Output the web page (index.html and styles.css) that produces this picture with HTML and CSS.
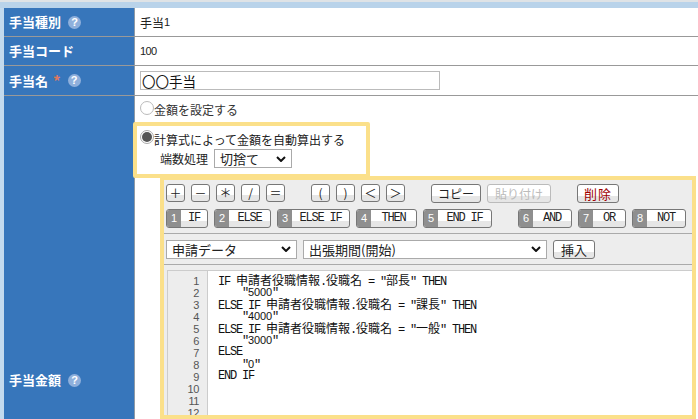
FILE: index.html
```html
<!DOCTYPE html>
<html lang="ja">
<head>
<meta charset="utf-8">
<title>手当</title>
<link rel="stylesheet" href="styles.css">
</head>
<body>
<div class="frame">
  <div class="row row-a">
    <div class="head"><span class="label">手当種別</span><span class="help">?</span></div>
    <div class="cell">手当<span class="num">1</span></div>
  </div>
  <div class="row row-a">
    <div class="head"><span class="label">手当コード</span></div>
    <div class="cell"><span class="num">100</span></div>
  </div>
  <div class="row row-b">
    <div class="head"><span class="label">手当名</span><span class="req">*</span><span class="help">?</span></div>
    <div class="cell"><input class="name-input" type="text" value="〇〇手当"></div>
  </div>
  <div class="row row-last">
    <div class="head head-bottom"><span class="label">手当金額</span><span class="help">?</span></div>
    <div class="cell-col">
      <div class="radio-line"><span class="radio"></span>金額を設定する</div>
      <div class="hl-box">
        <div class="radio-line2"><span class="radio radio-on"></span>計算式によって金額を自動算出する</div>
        <div class="round-line">端数処理<span class="select sel-round">切捨て<svg class="chev" viewBox="0 0 10 6"><path d="M1 1l4 4 4-4" /></svg></span></div>
      </div>
      <div class="editor-box">
        <div class="tools">
          <div class="btn-row">
            <span class="btn sym">＋</span><span class="btn sym">－</span><span class="btn sym">＊</span><span class="btn sym">/</span><span class="btn sym">＝</span>
            <span class="spacer"></span>
            <span class="btn sym">(</span><span class="btn sym">)</span><span class="btn sym">＜</span><span class="btn sym">＞</span>
            <span class="spacer"></span>
            <span class="btn wide">コピー</span><span class="btn wide off">貼り付け</span>
            <span class="spacer"></span>
            <span class="btn del">削除</span>
          </div>
          <div class="btn-row row2">
            <span class="kbtn k-if"><i>1</i><b>IF</b></span>
            <span class="kbtn k-else"><i>2</i><b>ELSE</b></span>
            <span class="kbtn k-elif"><i>3</i><b>ELSE IF</b></span>
            <span class="kbtn k-then"><i>4</i><b>THEN</b></span>
            <span class="kbtn k-end"><i>5</i><b>END IF</b></span>
            <span class="spacer"></span>
            <span class="kbtn k-and"><i>6</i><b>AND</b></span>
            <span class="kbtn k-or"><i>7</i><b>OR</b></span>
            <span class="kbtn k-not"><i>8</i><b>NOT</b></span>
          </div>
        </div>
        <div class="insert">
          <span class="select sel-data">申請データ<svg class="chev" viewBox="0 0 10 6"><path d="M1 1l4 4 4-4" /></svg></span>
          <span class="select sel-field">出張期間(開始)<svg class="chev" viewBox="0 0 10 6"><path d="M1 1l4 4 4-4" /></svg></span>
          <span class="btn ins">挿入</span>
        </div>
        <div class="code">
          <div class="gutter"><div>1</div><div>2</div><div>3</div><div>4</div><div>5</div><div>6</div><div>7</div><div>8</div><div>9</div><div>10</div><div>11</div><div>12</div></div>
          <div class="src">
            <div class="ln">IF <span class="ja">申請者役職情報</span>.<span class="ja">役職名</span> = "<span class="ja">部長</span>" THEN</div>
            <div class="ln">    "<span class="dg">5000</span>"</div>
            <div class="ln">ELSE IF <span class="ja">申請者役職情報</span>.<span class="ja">役職名</span> = "<span class="ja">課長</span>" THEN</div>
            <div class="ln">    "<span class="dg">4000</span>"</div>
            <div class="ln">ELSE IF <span class="ja">申請者役職情報</span>.<span class="ja">役職名</span> = "<span class="ja">一般</span>" THEN</div>
            <div class="ln">    "<span class="dg">3000</span>"</div>
            <div class="ln">ELSE</div>
            <div class="ln">    "<span class="dg">0</span>"</div>
            <div class="ln">END IF</div>
          </div>
        </div>
      </div>
    </div>
  </div>
</div>
</body>
</html>
```
FILE: styles.css
```css
* { box-sizing: border-box; }
html, body { margin: 0; height: 419px; overflow: hidden; background: #fff; }
body {
  font-family: "Noto Sans CJK JP", "Liberation Sans", sans-serif;
  font-size: 12px;
  color: #222;
}
.frame {
  height: 419px;
  width: 698px;
  background: #fff;
  border-top: 2px solid #dfe3e6;
  padding-top: 6px;
  position: relative;
  box-shadow: inset 4px 0 0 #c3daee;
}
.frame::before {
  content: "";
  display: block;
  position: absolute;
  left: 0; right: 0; top: 0;
  height: 6px;
  background: #b9d3ea;
}
.row { display: flex; border-bottom: 1px solid #999; margin-left: 4px; }
.row-a { height: 29px; }
.row-b { height: 30px; }
.row-last { height: 323px; border-bottom: 0; }
.head {
  width: 131px;
  flex: none;
  background: #3776bb;
  border-right: 1px solid #8f9aa5;
  display: flex;
  align-items: center;
  padding-left: 5px;
  color: #fff;
  font-weight: 700;
  font-size: 13px;
}
.head-bottom { align-items: flex-end; padding-bottom: 32px; }
.label { line-height: 14px; }
.req { color: #e0785c; font-size: 15px; margin-left: 5px; line-height: 14px; }
.help {
  width: 13px; height: 13px; border-radius: 50%;
  background: #8fb0dc; color: #fff;
  margin-left: 7px;
  font: 700 11px/13px "Liberation Sans", sans-serif;
  text-align: center;
}
.cell { flex: 1; display: flex; align-items: center; padding-left: 5px; font-size: 12px; color: #222; }
.num { font: 11px "Liberation Sans", sans-serif; letter-spacing: -.6px; }
.name-input {
  width: 300px; height: 19px; border: 1px solid #bbb; padding: 0 1px;
  font: 13.5px "Noto Sans CJK JP", sans-serif; color: #111; background: #fff; outline: 0;
}
.cell-col { flex: 1; min-width: 0; display: flex; flex-direction: column; }
.radio-line { height: 26px; display: flex; align-items: flex-start; padding: 5px 0 0 5px; font-size: 12px; line-height: 18px; color: #333; }
.radio { width: 14px; height: 14px; border-radius: 50%; border: 1px solid #bbb; background: #fff; flex: none; position: relative; }
.radio-on { border-color: #aaa; align-self: flex-start; margin-top: 1px; }
.radio-on::after { content: ""; position: absolute; left: 1px; top: 1px; width: 10px; height: 10px; border-radius: 50%; background: #555; }
.hl-box {
  margin-left: -2px;
  width: 237px;
  height: 56px;
  border: 4px solid #fbe08a;
  border-radius: 2px;
  background: #fff;
  padding: 3px 0 0 3px;
  font-size: 12px;
  position: relative;
}
.radio-line2 { display: flex; align-items: center; height: 20px; }
.round-line { display: flex; align-items: center; padding-left: 20px; height: 19px; }
.select {
  display: inline-flex; align-items: center; justify-content: space-between;
  border: 1px solid #aaa; background: #fff; height: 19px; padding: 0 5px 0 5px; font-size: 13px; color: #222;
}
.sel-round { width: 78px; margin-left: 6px; }
.chev { width: 10px; height: 6px; fill: none; stroke: #111; stroke-width: 2; }
.editor-box {
  margin: -2px 0 0 25px;
  width: 536px;
  height: 243px;
  border: 4px solid #fbe08a;
  background: #ededed;
  display: flex;
  flex-direction: column;
  position: relative;
}
.tools { height: 54px; border-bottom: 1px solid #aaa; padding: 4px 0 0 2px; }
.btn-row { display: flex; align-items: flex-start; height: 19px; gap: 6px; }
.row2 { margin-top: 6px; }
.btn {
  display: inline-flex; align-items: center; justify-content: center;
  height: 19px; border: 1px solid #777; border-radius: 3px;
  background: linear-gradient(#fff 65%, #e6e6e6 65%);
  font-size: 12px; color: #222; line-height: 1;
}
.sym { width: 19px; height: 18px; font-size: 12px; }
.spacer { width: 14px; flex: none; }
.wide { width: 50px; }
.off { width: 64px; color: #bbb; border-color: #bbb; }
.del { width: 42px; color: #a00000; font-size: 13px; letter-spacing: 1px; }
.kbtn {
  display: inline-flex; height: 19px; border: 1px solid #777; border-radius: 3px; overflow: hidden;
  background: linear-gradient(#fff 65%, #e6e6e6 65%);
  color: #222;
}
.kbtn i { width: 14px; flex: none; background: #8f8f8f; color: #fff; font: 11px/17px "Liberation Sans", sans-serif; text-align: center; }
.kbtn b { flex: 1; font: 12px/17px "Liberation Mono", monospace; letter-spacing: -1.2px; text-align: center; white-space: nowrap; }
.k-if { width: 42px; }
.k-else { width: 57px; }
.k-elif { width: 73px; }
.k-then { width: 61px; }
.k-end { width: 69px; }
.k-and { width: 54px; }
.k-or { width: 48px; }
.k-not { width: 54px; }
.insert { height: 31px; border-bottom: 1px solid #aaa; display: flex; align-items: center; gap: 6px; padding-left: 2px; }
.sel-data { width: 131px; }
.sel-field { width: 244px; }
.ins { width: 42px; font-size: 13px; }
.code { margin: 5px 0 0 3px; flex: 1; background: #fff; display: flex; border-top: 1px solid #ccc; min-height: 0; overflow: hidden; }
.gutter { width: 41px; flex: none; background: #ededed; border: 1px solid #ccc; border-width: 0 1px 0 1px; padding: 4px 8px 0 0; text-align: right; color: #555; font: 11px/12px "Liberation Sans", sans-serif; letter-spacing: -.4px; }
.src { margin: 3px 0 0 10px; font: 12px/12px "Liberation Mono", monospace; letter-spacing: -1.2px; color: #111; }
.ln { height: 12px; line-height: 12px; white-space: pre; }
.ja { font: 12px/12px "Noto Sans CJK JP", sans-serif; letter-spacing: 0; }
.dg { font: 11px/12px "Liberation Sans", sans-serif; letter-spacing: -.1px; }
```
